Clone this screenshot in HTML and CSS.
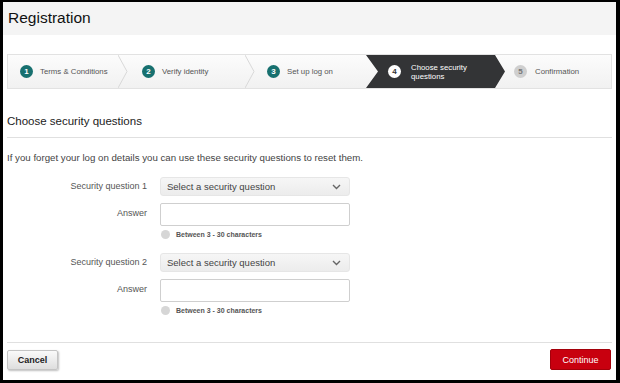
FILE: index.html
```html
<!DOCTYPE html>
<html lang="en">
<head>
    <meta charset="UTF-8">
    <meta name="viewport" content="width=device-width, initial-scale=1.0">
    <title>Registration</title>
    <link rel="stylesheet" href="styles.css">
</head>
<body>
    <div class="frame">
        <div class="header">
            <h1>Registration</h1>
        </div>

        <div class="content">
            <div class="stepper">
                <div class="step step-1">
                    <span class="num done">1</span>
                    <span class="step-label">Terms &amp; Conditions</span>
                </div>
                <svg class="sep" width="10" height="33" viewBox="0 0 10 33"><polyline points="0,0 9,16.5 0,33" fill="none" stroke="#d8d8d8" stroke-width="1"/></svg>
                <div class="step step-2">
                    <span class="num done">2</span>
                    <span class="step-label">Verify identity</span>
                </div>
                <svg class="sep" width="10" height="33" viewBox="0 0 10 33"><polyline points="0,0 9,16.5 0,33" fill="none" stroke="#d8d8d8" stroke-width="1"/></svg>
                <div class="step step-3">
                    <span class="num done">3</span>
                    <span class="step-label">Set up log on</span>
                </div>
                <div class="step step-active">
                    <span class="num current">4</span>
                    <span class="step-label">Choose security<br>questions</span>
                </div>
                <div class="step step-5">
                    <span class="num todo">5</span>
                    <span class="step-label">Confirmation</span>
                </div>
            </div>

            <h2 class="section-title">Choose security questions</h2>
            <p class="intro">If you forget your log on details you can use these security questions to reset them.</p>

            <div class="form">
                <label class="form-label">Security question 1</label>
                <div class="select">
                    <span>Select a security question</span>
                    <svg width="9" height="6" viewBox="0 0 9 6"><polyline points="1,1 4.5,4.5 8,1" fill="none" stroke="#666" stroke-width="1.4"/></svg>
                </div>

                <label class="form-label answer-label">Answer</label>
                <div class="field-wrap">
                    <input type="text" class="answer">
                    <div class="hint"><span class="dot"></span>Between 3 - 30 characters</div>
                </div>

                <label class="form-label q2-label">Security question 2</label>
                <div class="select select-2">
                    <span>Select a security question</span>
                    <svg width="9" height="6" viewBox="0 0 9 6"><polyline points="1,1 4.5,4.5 8,1" fill="none" stroke="#666" stroke-width="1.4"/></svg>
                </div>

                <label class="form-label answer-label">Answer</label>
                <div class="field-wrap">
                    <input type="text" class="answer">
                    <div class="hint"><span class="dot"></span>Between 3 - 30 characters</div>
                </div>
            </div>

            <div class="footer">
                <button class="btn btn-cancel">Cancel</button>
                <button class="btn btn-continue">Continue</button>
            </div>
        </div>
    </div>
</body>
</html>
```

FILE: styles.css
```css
html, body {
    margin: 0;
    padding: 0;
    background-color: #000;
}
body {
    font-family: 'Liberation Sans', Arial, sans-serif;
    color: #333;
    padding: 2px 4px 3px 3px;
    width: 620px;
    height: 383px;
    box-sizing: border-box;
}
.frame {
    background-color: #fff;
    height: 378px;
    display: flex;
    flex-direction: column;
}
.header {
    background-color: #f4f4f4;
    height: 33px;
    padding-left: 5px;
}
.header h1 {
    margin: 0;
    font-size: 15.5px;
    font-weight: normal;
    line-height: 31px;
    color: #111;
}
.content {
    padding: 0 4px;
    flex: 1;
    display: flex;
    flex-direction: column;
}
.stepper {
    margin-top: 19px;
    height: 33px;
    border: 1px solid #e2e2e2;
    background: linear-gradient(#fcfcfc, #f1f1f1);
    display: flex;
    font-size: 7.8px;
    color: #555;
}
.step {
    display: flex;
    align-items: center;
    height: 33px;
    box-sizing: border-box;
}
.step-1 {
    width: 110px;
    padding-left: 12px;
}
.step-2 {
    width: 117px;
    padding-left: 14px;
}
.step-3 {
    width: 111px;
    padding-left: 12px;
}
.step-active {
    width: 139px;
    padding-left: 22px;
    background-color: #333436;
    color: #fff;
    clip-path: polygon(0 0, 129px 0, 100% 50%, 129px 100%, 0 100%, 12px 50%);
    line-height: 9px;
}
.step-5 {
    flex: 1;
    padding-left: 9px;
}
.sep {
    flex-shrink: 0;
}
.num {
    width: 13px;
    height: 13px;
    border-radius: 50%;
    display: inline-flex;
    align-items: center;
    justify-content: center;
    font-size: 8px;
    font-weight: bold;
    margin-right: 7px;
    flex-shrink: 0;
}
.num.done {
    background-color: #17706f;
    color: #fff;
}
.num.current {
    background-color: #fff;
    color: #333;
    margin-right: 10px;
}
.num.todo {
    background-color: #cfcfcf;
    color: #777;
    margin-right: 8px;
}
.section-title {
    margin: 25px 0 0;
    font-size: 11.5px;
    font-weight: normal;
    line-height: 15px;
    color: #222;
    padding-bottom: 8px;
    border-bottom: 1px solid #e0e0e0;
}
.intro {
    margin: 14px 0 0;
    font-size: 9.7px;
    line-height: 12px;
    color: #444;
}
.form {
    margin-top: 13px;
    display: grid;
    grid-template-columns: 140px 190px;
    column-gap: 13px;
    align-items: start;
}
.form-label {
    text-align: right;
    font-size: 9px;
    color: #555;
    line-height: 19px;
}
.answer-label {
    margin-top: 7px;
    line-height: 21px;
}
.q2-label {
    margin-top: 11px;
}
.select {
    height: 19px;
    box-sizing: border-box;
    background: linear-gradient(#f6f6f6, #ececec);
    border: 1px solid #e6e6e6;
    border-radius: 3px;
    display: flex;
    align-items: center;
    justify-content: space-between;
    padding: 0 8px 0 6px;
    font-size: 9.5px;
    color: #444;
}
.select-2 {
    margin-top: 11px;
}
.field-wrap {
    margin-top: 7px;
}
.answer {
    display: block;
    width: 190px;
    height: 23px;
    box-sizing: border-box;
    border: 1px solid #cfcfcf;
    border-radius: 2px;
    margin: 0;
    padding: 0 4px;
    background-color: #fff;
}
.hint {
    display: flex;
    align-items: center;
    height: 15px;
    font-size: 7px;
    font-weight: bold;
    color: #555;
    margin-top: 1px;
}
.dot {
    width: 9px;
    height: 9px;
    border-radius: 50%;
    background-color: #d6d6d6;
    margin: 0 6px 0 1px;
}
.footer {
    margin-top: auto;
    margin-bottom: 10px;
    border-top: 1px solid #e0e0e0;
    padding-top: 6px;
    display: flex;
    justify-content: space-between;
    align-items: flex-start;
}
.btn {
    font-family: 'Liberation Sans', Arial, sans-serif;
    font-size: 9px;
    border-radius: 2px;
    cursor: pointer;
    padding: 0;
}
.btn-cancel {
    width: 51px;
    height: 20px;
    margin-top: 1px;
    background: linear-gradient(#fafafa, #dedede);
    border: 1px solid #c4c4c4;
    box-shadow: 1px 1px 2px rgba(0, 0, 0, 0.25);
    color: #222;
    font-weight: bold;
}
.btn-continue {
    width: 61px;
    height: 21px;
    margin-right: 1px;
    background-color: #c8000f;
    border: 1px solid #a4000a;
    color: #fff;
}
```
